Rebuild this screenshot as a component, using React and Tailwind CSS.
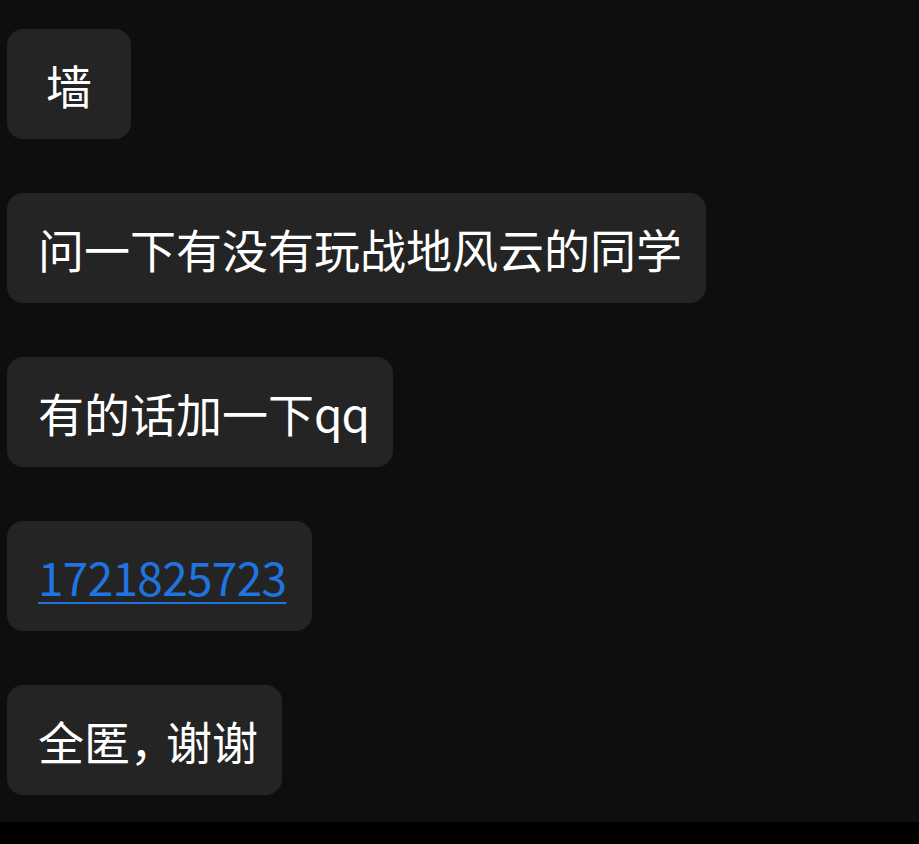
import React from 'react';

const Bubble = ({ children, className = '' }) => (
    <div className={`h-[110px] flex items-center rounded-2xl bg-[#232423] text-white ${className}`}>
        {children}
    </div>
);

export default function App() {
    return (
        <div
            className="w-[919px] h-[844px] flex flex-col bg-black overflow-hidden"
            style={{ fontFamily: '"Noto Sans CJK SC", "Noto Sans", sans-serif' }}
        >
            <div className="h-[822px] bg-[#0e0e0e] pt-[29px] px-[7px] flex flex-col items-start gap-[54px] text-[46px] leading-none">
                <Bubble className="w-[124px] justify-center">墙</Bubble>
                <Bubble className="pl-[31px] pr-[24px]">问一下有没有玩战地风云的同学</Bubble>
                <Bubble className="pl-[31px] pr-[24px]">
                    有的话加一下<span className="tracking-[-1px]">qq</span>
                </Bubble>
                <Bubble className="pl-[31px] pr-[26px]">
                    <a href="#" className="text-[#1f74e0] underline decoration-2 underline-offset-[6px] tracking-[-0.7px]">
                        1721825723
                    </a>
                </Bubble>
                <Bubble className="pl-[31px] pr-[24px]">
                    全匿<span className="[font-feature-settings:'halt'] mr-[13px]">，</span>谢谢
                </Bubble>
            </div>
        </div>
    );
}
